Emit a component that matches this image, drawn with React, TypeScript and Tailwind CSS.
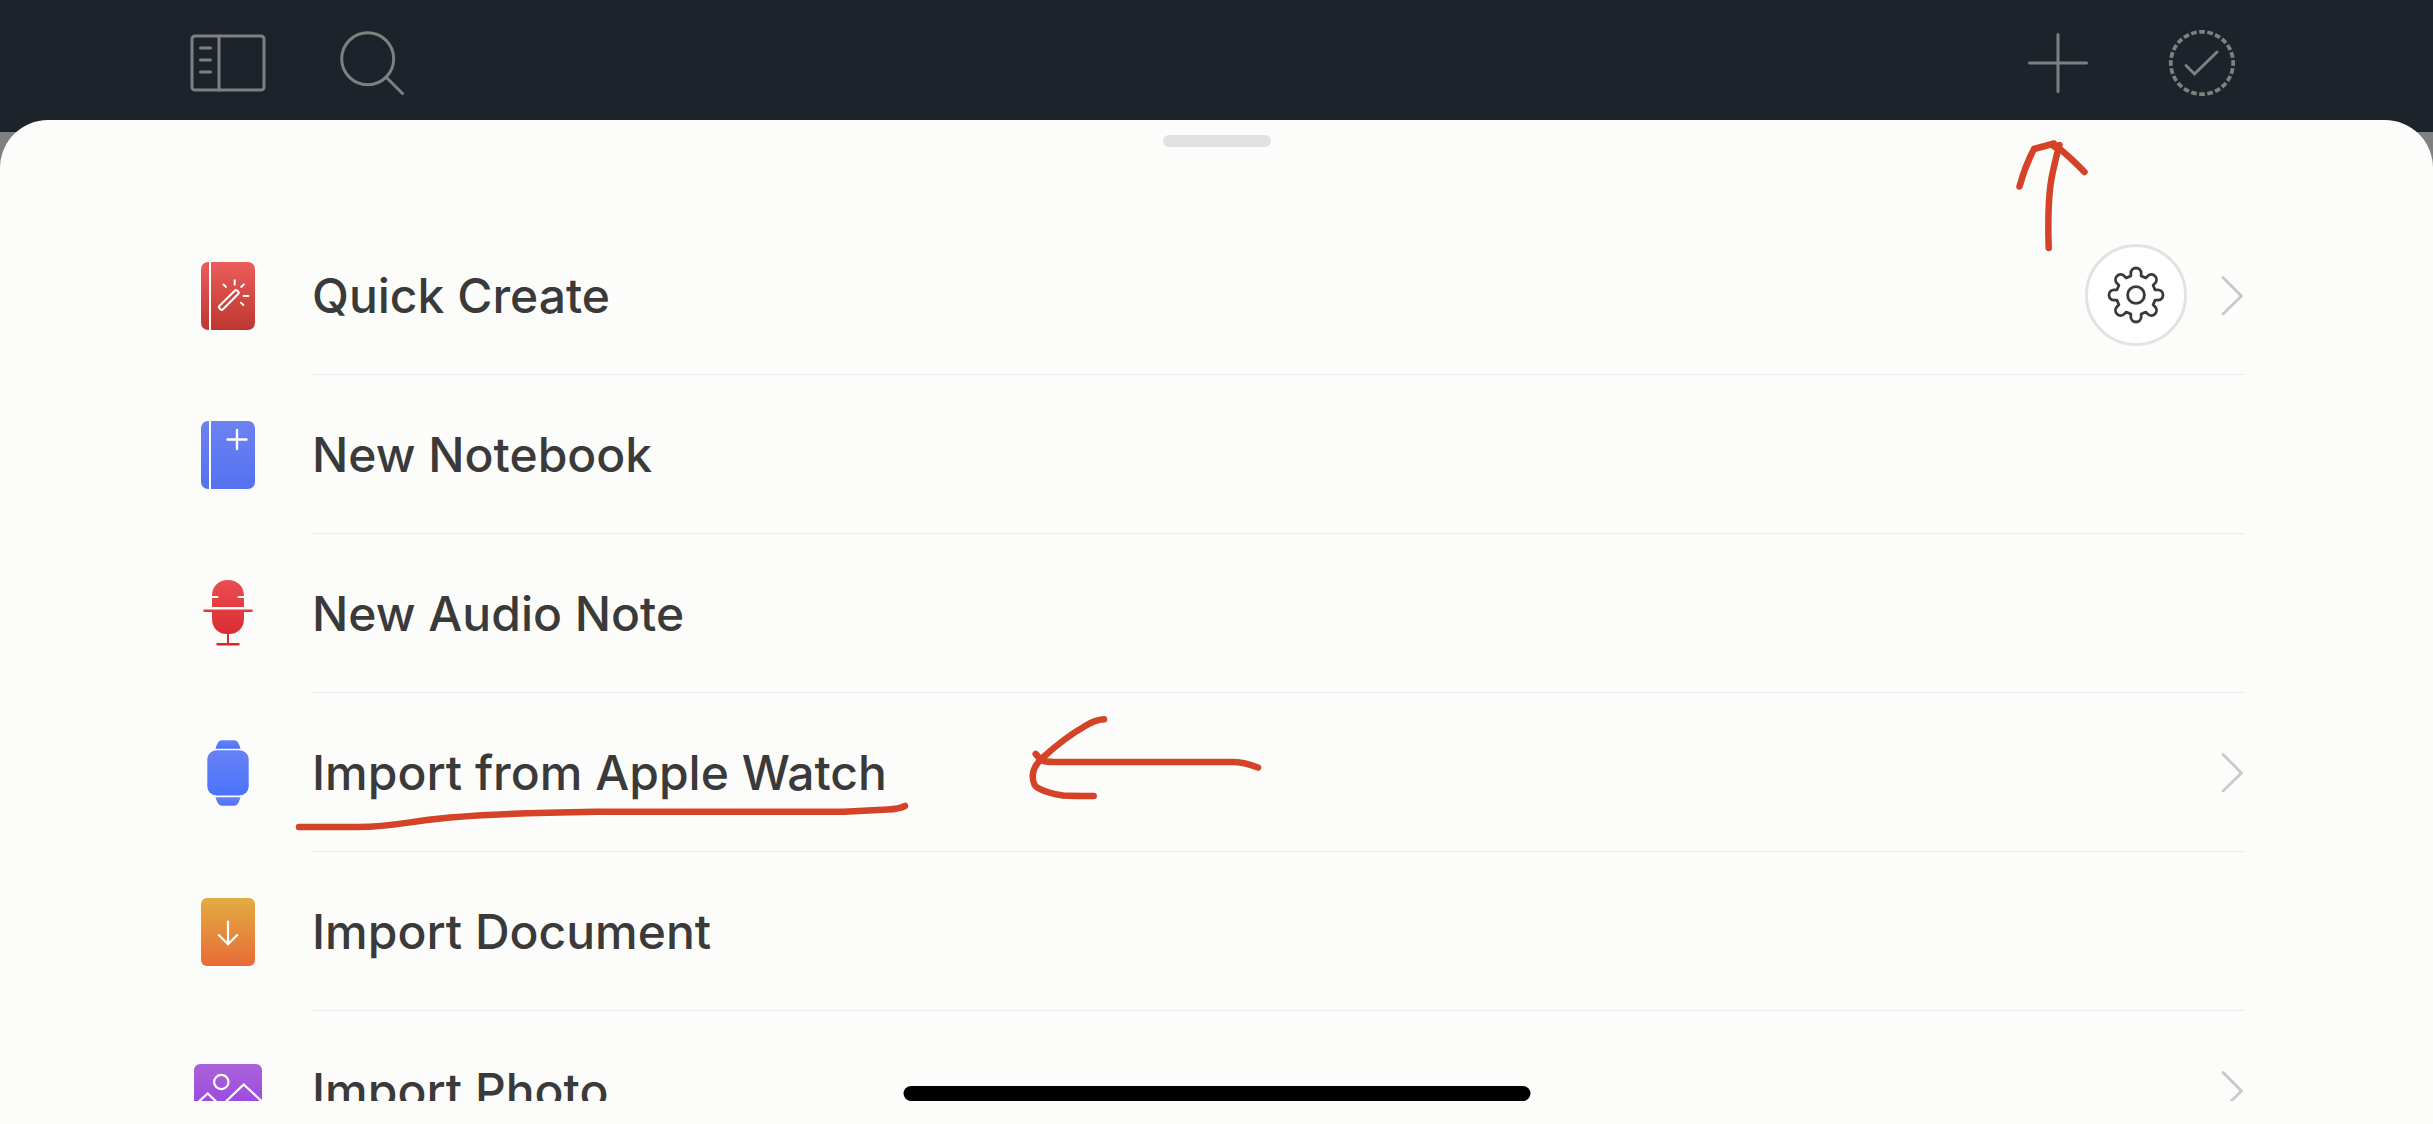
import { useState } from "react";

interface MenuItem {
  id: string;
  title: string;
  icon: React.ReactNode;
  hasSettings?: boolean;
  hasChevron?: boolean;
  isMarked?: boolean;
}

interface GradientProps {
  id: string;
  from: string;
  to: string;
}

function Gradient({ id, from, to }: GradientProps) {
  return (
    <defs>
      <linearGradient id={id} x1="0" y1="0" x2="0" y2="1">
        <stop offset="0" stopColor={from} />
        <stop offset="1" stopColor={to} />
      </linearGradient>
    </defs>
  );
}

function QuickCreateIcon() {
  return (
    <svg viewBox="0 0 72 72" className="size-[72px]" fill="none">
      <Gradient id="quick" from="#ea5d5b" to="#bf362f" />
      <rect x="9" y="2" width="54" height="68" rx="7" fill="url(#quick)" />
      <path d="M18 2v68" stroke="#fff" strokeWidth="2" />
      <g stroke="#fff" strokeWidth="2" strokeLinecap="round">
        <rect
          x="24.5"
          y="37.9"
          width="25"
          height="4.8"
          rx="1.8"
          transform="rotate(-45 36.5 40.3)"
        />
        <path d="M42.7 20.3v4.4M31.5 24.5l2.4 2.4M51.8 24.5l-2.6 2.4M51.6 36h4.8M49 42.7l2.4 2.2" />
      </g>
    </svg>
  );
}

function NotebookIcon() {
  return (
    <svg viewBox="0 0 72 72" className="size-[72px]" fill="none">
      <Gradient id="notebook" from="#6c82f1" to="#5472ef" />
      <rect x="9" y="2" width="54" height="68" rx="7" fill="url(#notebook)" />
      <path d="M18 2v68" stroke="#fff" strokeWidth="2" />
      <path
        d="M45 11v19M35.5 20.5h19"
        stroke="#fff"
        strokeWidth="2.4"
        strokeLinecap="round"
      />
    </svg>
  );
}

function AudioIcon() {
  return (
    <svg viewBox="0 0 72 72" className="size-[72px]">
      <Gradient id="audio" from="#ec4d52" to="#d6262a" />
      <path
        fill="url(#audio)"
        d="M20 18C20 8 27 2 36 2s16 6 16 16h-5.5a1 1 0 0 0 0 2H52v9H20v-9h5.5a1 1 0 0 0 0-2zM12.5 31.5h47a1.2 1.2 0 0 1 0 2.5H52v6.5C52 50 46 56 37 56v9h9.5a1.2 1.2 0 0 1 0 2.5h-21a1.2 1.2 0 0 1 0-2.5H35v-9C26 56 20 50 20 40.5V34h-7.5a1.2 1.2 0 0 1 0-2.5z"
      />
    </svg>
  );
}

function WatchIcon() {
  return (
    <svg viewBox="0 0 72 72" className="size-[72px]">
      <Gradient id="watch" from="#6881f5" to="#4a73fb" />
      <g fill="url(#watch)">
        <path d="M23.5 11.7c1-3.5 2.8-8.4 6-8.4h13c3.2 0 5 4.900 6 8.400z" />
        <rect x="15.3" y="13.3" width="41.4" height="45.2" rx="9" />
        <path d="M23.5 60.3c1 3.500 2.800 8.400 6 8.400h13c3.200 0 5-4.900 6-8.400z" />
      </g>
    </svg>
  );
}

function DocumentIcon() {
  return (
    <svg viewBox="0 0 72 72" className="size-[72px]" fill="none">
      <Gradient id="document" from="#e3ac42" to="#e86b37" />
      <rect x="9" y="2" width="54" height="68" rx="6" fill="url(#document)" />
      <path
        d="M36 25.5v23M26.8 39l9.2 9.2 9.2-9.2"
        stroke="#fff"
        strokeWidth="2.2"
        strokeLinecap="round"
      />
    </svg>
  );
}

function PhotoIcon() {
  return (
    <svg viewBox="0 0 72 72" className="size-[72px]" fill="none">
      <Gradient id="photo" from="#ab63da" to="#9740e0" />
      <rect x="2" y="9" width="68" height="54" rx="6" fill="url(#photo)" />
      <g stroke="#fff" strokeWidth="2.2">
        <circle cx="29.3" cy="27" r="7.2" />
        <path d="M2 51l13.7-12.5L32 54M25 55l26.7-25.5L70 46.5" />
      </g>
    </svg>
  );
}

// Eight rounded teeth, each one turned 45 degrees from the last
const GEAR_PATH =
  Array.from({ length: 8 }, (_, i) => {
    const angle = (i * Math.PI) / 4;
    const at = (x: number, y: number) =>
      `${(x * Math.cos(angle) - y * Math.sin(angle)).toFixed(2)} ${(x * Math.sin(angle) + y * Math.cos(angle)).toFixed(2)}`;
    return `${i === 0 ? "M" : "L"}${at(-5.2, -19)}L${at(-5.2, -21.8)}A5.2 5.2 0 0 1 ${at(5.2, -21.8)}L${at(5.2, -19)}`;
  }).join("") + "Z";

function GearIcon() {
  return (
    <svg
      viewBox="-30 -30 60 60"
      className="size-[60px]"
      fill="none"
      stroke="#3a3a3a"
      strokeWidth="2.8"
      strokeLinejoin="round"
    >
      <path d={GEAR_PATH} />
      <circle r="8.4" />
    </svg>
  );
}

function ChevronIcon() {
  return (
    <svg
      viewBox="0 0 24 40"
      className="h-10 w-6 shrink-0"
      fill="none"
      stroke="#c9c9c9"
      strokeWidth="2.8"
      strokeLinecap="round"
      strokeLinejoin="round"
    >
      <path d="M3 2.5L21.5 21 3 39" />
    </svg>
  );
}

const MENU_ITEMS: MenuItem[] = [
  {
    id: "quick",
    title: "Quick Create",
    icon: <QuickCreateIcon />,
    hasSettings: true,
    hasChevron: true,
  },
  { id: "notebook", title: "New Notebook", icon: <NotebookIcon /> },
  { id: "audio", title: "New Audio Note", icon: <AudioIcon /> },
  {
    id: "watch",
    title: "Import from Apple Watch",
    icon: <WatchIcon />,
    hasChevron: true,
    isMarked: true,
  },
  { id: "document", title: "Import Document", icon: <DocumentIcon /> },
  {
    id: "photo",
    title: "Import Photo",
    icon: <PhotoIcon />,
    hasChevron: true,
  },
];

function Toolbar() {
  return (
    <header className="flex h-[132px] shrink-0 items-center justify-between bg-[#1c232a] pr-[195px] pb-1.5 pl-48 text-[#808080]">
      <div className="flex gap-[72px]">
        <button type="button" aria-label="Toggle sidebar">
          <svg
            viewBox="0 0 72 72"
            className="size-[72px] overflow-visible"
            fill="none"
            stroke="currentColor"
            strokeWidth="3"
            strokeLinecap="round"
          >
            <rect x="0" y="9" width="72" height="54" rx="3" />
            <path d="M27 9v54M8.5 21h10M8.5 33h10M8.5 45h10" />
          </svg>
        </button>
        <button type="button" aria-label="Search">
          <svg
            viewBox="0 0 72 72"
            className="size-[72px]"
            fill="none"
            stroke="currentColor"
            strokeWidth="3"
            strokeLinecap="round"
          >
            <circle cx="31.7" cy="31.7" r="26" />
            <path d="M50 50l16.5 16.5" />
          </svg>
        </button>
      </div>
      <div className="flex gap-[72px]">
        <button type="button" aria-label="Add">
          <svg
            viewBox="0 0 72 72"
            className="size-[72px]"
            fill="none"
            stroke="currentColor"
            strokeWidth="3"
            strokeLinecap="round"
          >
            <path d="M36 7.5v57M7.5 36h57" />
          </svg>
        </button>
        <button type="button" aria-label="Select">
          <svg
            viewBox="0 0 72 72"
            className="size-[72px]"
            fill="none"
            stroke="currentColor"
          >
            <circle
              cx="36"
              cy="36"
              r="31.2"
              strokeWidth="3.8"
              pathLength="240"
              strokeDasharray="7 3"
              strokeDashoffset="3.5"
            />
            <path
              d="M20 38.5l8.5 8.5L51 25"
              strokeWidth="3"
              strokeLinecap="round"
            />
          </svg>
        </button>
      </div>
    </header>
  );
}

function RowMarks() {
  return (
    <>
      <svg
        viewBox="0 0 624 44"
        className="pointer-events-none absolute top-[101px] left-72 h-11 w-[624px]"
        fill="none"
        stroke="#d44227"
        strokeWidth="6.5"
        strokeLinecap="round"
        strokeLinejoin="round"
      >
        <path d="M11 33H70C100 33 120 28 148 25Q175 22 211 20.5Q250 18.500 308 17.700H556L600 15.500Q611 15 617 12" />
      </svg>
      <svg
        viewBox="0 0 244 96"
        className="pointer-events-none absolute top-[15px] left-[1024px] h-24 w-[244px]"
        fill="none"
        stroke="#d44227"
        strokeWidth="6.5"
        strokeLinecap="round"
        strokeLinejoin="round"
      >
        <path d="M234 59.5Q220 54 208 54H31Q20 54 17 52L11.7 46" />
        <path d="M80 11.3Q71 12 62 17.5Q40 30 19 49.5Q9 58 8.7 68Q9 78 14 80Q22 85 39 87.5Q48 88 69.7 88" />
      </svg>
    </>
  );
}

function MenuRow({ item, onSelect }: { item: MenuItem; onSelect: () => void }) {
  return (
    <li className="relative flex h-[159px] items-center gap-12 pr-[189px] pl-48">
      <div className="shrink-0 pt-px">{item.icon}</div>
      <div className="flex h-full min-w-0 flex-1 items-center border-b border-[#ececec]">
        <button
          type="button"
          onClick={onSelect}
          className="h-full flex-1 pt-0.5 text-left text-[48px] leading-[60px] font-medium whitespace-nowrap text-[#3a3a3a]"
        >
          {item.title}
        </button>
        {item.hasSettings && (
          <button
            type="button"
            aria-label={`${item.title} settings`}
            className="mr-[33px] flex size-[102px] shrink-0 items-center justify-center rounded-full border-3 border-[#e2e2e1] bg-white"
          >
            <GearIcon />
          </button>
        )}
        {item.hasChevron && <ChevronIcon />}
      </div>
      {item.isMarked && <RowMarks />}
    </li>
  );
}

export default function App() {
  const [, setSelected] = useState<string | null>(null);

  return (
    <div className="flex h-screen flex-col overflow-hidden bg-[#808080] font-[Inter,sans-serif]">
      <Toolbar />

      {/* Sheet */}
      <main className="relative -mt-3 flex min-h-0 flex-1 flex-col rounded-t-[48px] bg-[#fcfdfa] pt-[15px] pb-[23px]">
        <div className="h-3 w-[108px] shrink-0 self-center rounded-full bg-[#e1e1e1]" />
        <ul className="mt-[69px] min-h-0 flex-1 overflow-x-hidden overflow-y-auto [scrollbar-width:none]">
          {MENU_ITEMS.map((item) => (
            <MenuRow
              key={item.id}
              item={item}
              onSelect={() => setSelected(item.id)}
            />
          ))}
        </ul>

        {/* Arrow to the add button */}
        <svg
          viewBox="0 0 84 120"
          className="pointer-events-none absolute top-4 right-[339px] h-[120px] w-[84px]"
          fill="none"
          stroke="#d44227"
          strokeWidth="6.5"
          strokeLinecap="round"
          strokeLinejoin="round"
        >
          <path d="M38.7 112Q37 60 43 35Q47 17 49.5 9" />
          <path d="M9.5 50.5Q15 30 24 13L44 7.5" />
          <path d="M44 10.5L51 14Q62 23 74.5 36" />
        </svg>

        {/* Home indicator */}
        <div className="absolute bottom-[23px] left-1/2 h-[15px] w-[627px] -translate-x-1/2 rounded-full bg-black" />
      </main>
    </div>
  );
}
